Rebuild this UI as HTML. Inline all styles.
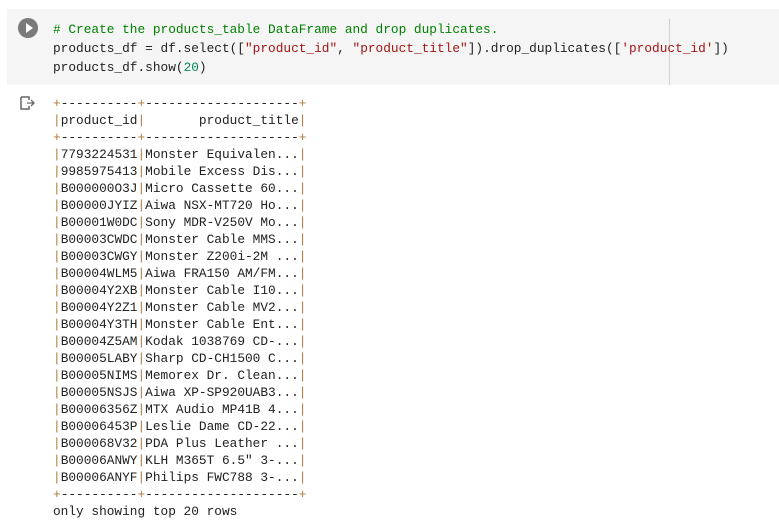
<!DOCTYPE html>
<html><head><style>
body{margin:0;background:#fff;width:779px;height:527px;overflow:hidden;position:relative;font-family:"Liberation Mono",monospace}
.cell{position:absolute;left:7px;top:9px;width:772px;height:76px;background:#f5f5f5}
.ruler{position:absolute;left:669px;top:19px;width:1px;height:66px;background:#d0d0d0}
.play{position:absolute;left:18px;top:18px;width:20px;height:20px;border-radius:50%;background:#7a7a7a}
.play:after{content:"";position:absolute;left:8px;top:5px;border-left:7px solid #fff;border-top:5px solid transparent;border-bottom:5px solid transparent}
pre{margin:0;position:absolute;font-family:"Liberation Mono",monospace}
.code{left:53px;top:20px;font-size:12.8px;line-height:19px;color:#222}
.c{color:#008000}.s{color:#a31515}.n{color:#098658}
.out{left:53px;top:95px;font-size:12.8px;line-height:17px;color:#212121}
.p{color:#b07a3e}
</style></head><body>
<div class="cell"></div><div class="ruler"></div><div class="play"></div>
<pre class="code"><span class="c"># Create the products_table DataFrame and drop duplicates.</span>
products_df = df.select([<span class="s">"product_id"</span>, <span class="s">"product_title"</span>]).drop_duplicates([<span class="s">'product_id'</span>])
products_df.show(<span class="n">20</span>)</pre>
<svg style="position:absolute;left:20px;top:96px" width="16" height="14" viewBox="0 0 16 14"><path d="M1 1h8v3M9 10v3H1V1" fill="none" stroke="#666" stroke-width="1.5"/><path d="M7 7h7M11 4l3 3-3 3" fill="none" stroke="#666" stroke-width="1.3"/></svg>
<pre class="out"><span class="p">+</span>----------<span class="p">+</span>--------------------<span class="p">+</span>
<span class="p">|</span>product_id<span class="p">|</span>       product_title<span class="p">|</span>
<span class="p">+</span>----------<span class="p">+</span>--------------------<span class="p">+</span>
<span class="p">|</span>7793224531<span class="p">|</span>Monster Equivalen...<span class="p">|</span>
<span class="p">|</span>9985975413<span class="p">|</span>Mobile Excess Dis...<span class="p">|</span>
<span class="p">|</span>B000000O3J<span class="p">|</span>Micro Cassette 60...<span class="p">|</span>
<span class="p">|</span>B00000JYIZ<span class="p">|</span>Aiwa NSX-MT720 Ho...<span class="p">|</span>
<span class="p">|</span>B00001W0DC<span class="p">|</span>Sony MDR-V250V Mo...<span class="p">|</span>
<span class="p">|</span>B00003CWDC<span class="p">|</span>Monster Cable MMS...<span class="p">|</span>
<span class="p">|</span>B00003CWGY<span class="p">|</span>Monster Z200i-2M ...<span class="p">|</span>
<span class="p">|</span>B00004WLM5<span class="p">|</span>Aiwa FRA150 AM/FM...<span class="p">|</span>
<span class="p">|</span>B00004Y2XB<span class="p">|</span>Monster Cable I10...<span class="p">|</span>
<span class="p">|</span>B00004Y2Z1<span class="p">|</span>Monster Cable MV2...<span class="p">|</span>
<span class="p">|</span>B00004Y3TH<span class="p">|</span>Monster Cable Ent...<span class="p">|</span>
<span class="p">|</span>B00004Z5AM<span class="p">|</span>Kodak 1038769 CD-...<span class="p">|</span>
<span class="p">|</span>B00005LABY<span class="p">|</span>Sharp CD-CH1500 C...<span class="p">|</span>
<span class="p">|</span>B00005NIMS<span class="p">|</span>Memorex Dr. Clean...<span class="p">|</span>
<span class="p">|</span>B00005NSJS<span class="p">|</span>Aiwa XP-SP920UAB3...<span class="p">|</span>
<span class="p">|</span>B00006356Z<span class="p">|</span>MTX Audio MP41B 4...<span class="p">|</span>
<span class="p">|</span>B00006453P<span class="p">|</span>Leslie Dame CD-22...<span class="p">|</span>
<span class="p">|</span>B000068V32<span class="p">|</span>PDA Plus Leather ...<span class="p">|</span>
<span class="p">|</span>B00006ANWY<span class="p">|</span>KLH M365T 6.5" 3-...<span class="p">|</span>
<span class="p">|</span>B00006ANYF<span class="p">|</span>Philips FWC788 3-...<span class="p">|</span>
<span class="p">+</span>----------<span class="p">+</span>--------------------<span class="p">+</span>
only showing top 20 rows</pre>
</body></html>
